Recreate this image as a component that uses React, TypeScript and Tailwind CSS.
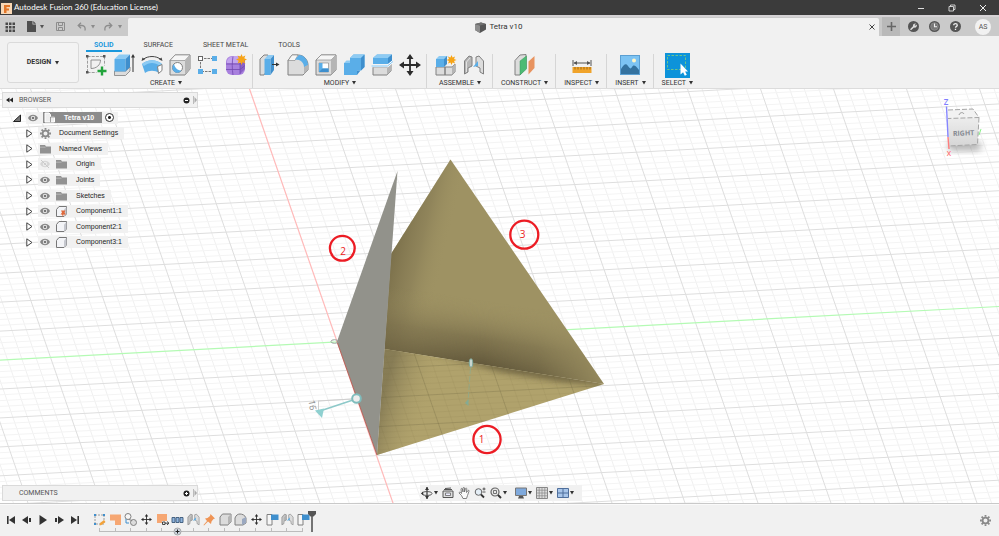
import type { ReactNode } from 'react';

const BLUE = '#5aaee8';
const BLUE_D = '#3f8fcd';
const BLUE_L = '#8ecbf3';
const LINE = '#808080';
const FACE = '#dcdcdc';
const FACE_L = '#f6f6f6';
const FACE_D = '#b5b5b5';

function Icon({ size = 22, w, label, children }: { size?: number; w?: number; label?: string; children: ReactNode }) {
  return (
    <svg
      width={w ?? size}
      height={size}
      viewBox={`0 0 ${w ?? size} ${size}`}
      fill="none"
      className="block shrink-0"
      aria-hidden={label ? undefined : true}
      aria-label={label}
    >
      {children}
    </svg>
  );
}

function Caret({ className = 'text-[#333]' }: { className?: string }) {
  return (
    <svg width="4" height="4" viewBox="0 0 4 4" className={`block shrink-0 ${className}`} aria-hidden>
      <path d="M0 0h4L2 3.500z" fill="currentColor" />
    </svg>
  );
}

function Spark({ x, y, r = 5 }: { x: number; y: number; r?: number }) {
  const pts = Array.from({ length: 16 }, (_, i) => {
    const a = (i * Math.PI) / 8;
    const k = i % 2 ? r * 0.55 : r;
    return `${x + k * Math.cos(a)},${y + k * Math.sin(a)}`;
  }).join(' ');
  return <polygon points={pts} fill="#f7a416" />;
}

/* ---------- ribbon icons ---------- */

const SketchIcon = () => (
  <Icon>
    <path d="M2.500 2.500h17M2.500 2.500v16M2.500 18.500h9M19.500 2.500v9" stroke="#888" strokeWidth=".8" strokeDasharray="3 1.200" />
    <path d="M1 1h2.500v2.500H1zM18 1h2.500v2.500H18zM1 17h2.500v2.500H1z" fill="#555" />
    <path d="M6 6h9.500c0 5-4 8.500-9.500 8.500z" stroke="#888" strokeWidth=".9" />
    <path d="M17 12.500v9M12.500 17h9" stroke="#22a43c" strokeWidth="2.400" />
  </Icon>
);
const ExtrudeIcon = () => (
  <Icon>
    <path d="M1.500 17h11l4.500-4v4l-4.500 4.500h-11z" fill={FACE} stroke={LINE} strokeWidth=".8" />
    <path d="M1.500 5h11v12.500h-11z" fill={BLUE} />
    <path d="M1.500 5 6 .5h11L12.500 5z" fill={BLUE_L} />
    <path d="M12.500 5 17 .5v12.500l-4.500 4.500z" fill={BLUE_D} />
    <path d="M20 2v16" stroke="#333" />
    <path d="M20 0l2 3.500h-4z" fill="#333" />
  </Icon>
);
const RevolveIcon = () => (
  <Icon>
    <path d="M1 10c6-5 14-5 20 0l-3 9c-4-3-10-3-14 0z" fill={BLUE} />
    <path d="M1 10c6-5 14-5 20 0l-2 2c-5-4-11-4-16 0z" fill={BLUE_L} />
    <path d="M16.500 12.500 21 10.500v6l-3.500 3z" fill="#fff" stroke={LINE} />
    <path d="M2 5.500c5-4 13-4 18 0" stroke="#444" />
    <path d="M.5 7l1-3.500 2.500 2zM21.500 7l-1-3.500-2.500 2z" fill="#444" />
  </Icon>
);
const HoleIcon = () => (
  <Icon>
    <path d="M1 6.500 6 1h15v14l-5 6H1z" fill={FACE} stroke={LINE} />
    <path d="M1 6.500 6 1h15l-5 5.500z" fill={FACE_L} stroke={LINE} strokeWidth=".6" />
    <path d="M16 6.500 21 1v14l-5 6z" fill={FACE_D} />
    <circle cx="8.500" cy="13.500" r="5" fill="#fff" stroke={LINE} />
    <path d="M5 10a5 5 0 1 0 7.500 6.500C8.500 16.500 6 14 5 10z" fill={BLUE} />
  </Icon>
);
const PatternIcon = () => (
  <Icon>
    <path d="M3.500 4.500h15M3.500 4.500v13h15" stroke="#777" strokeDasharray="2.500 1" />
    <rect x="1.500" y="2.500" width="4" height="4" fill="#fff" stroke="#666" />
    <path d="M15 2h5v5h-5zM15 15h5v5h-5zM1 15h5v5H1z" fill={BLUE} />
  </Icon>
);
const FormIcon = () => (
  <Icon>
    <rect x="1" y="2" width="19" height="19" rx="6" fill="#a880de" />
    <path d="M2 7c2-5 6-5 10-5s6 1 7 3l-4 4H2z" fill="#c3a5ee" />
    <path d="M15 9l5-4v10l-5 5z" fill="#8a60c6" />
    <path d="M1 10h14l5-5M1 15.500h14l5-4M8 2.500C7 8 7 15 8 21M15 9v11" stroke="#7247b0" strokeWidth=".8" />
    <Spark x={16.500} y={5.500} r={5.500} />
  </Icon>
);
const PressPullIcon = () => (
  <Icon>
    <path d="M1 5l4-4h4v14l-4 6H1z" fill={FACE} stroke={LINE} />
    <path d="M5.500 5h6v16h-6z" fill={BLUE} />
    <path d="M5.500 5 9 1h6l-3.500 4z" fill={BLUE_L} />
    <path d="M11.500 5 15 1v15l-3.500 5z" fill={BLUE_D} />
    <path d="M13 10.500h5" stroke="#333" />
    <path d="M20.500 10.500l-3.500-2v4z" fill="#333" />
  </Icon>
);
const FilletIcon = () => (
  <Icon>
    <path d="M1 6.500 5 1h6c6 0 10 5 10 10v5l-5 5H1z" fill={FACE} stroke={LINE} />
    <path d="M1 6.500 5 1h6L8 6.500z" fill={FACE_L} stroke={LINE} strokeWidth=".6" />
    <path d="M8 5.500 12 1c5 0 9 5 9 10l-4 2.500c0-4.500-3-8-9-8z" fill={BLUE} />
    <path d="M17 13l4-2v5l-4 4z" fill={FACE_D} />
  </Icon>
);
const ShellIcon = () => (
  <Icon>
    <path d="M1 6 6 1h15v15l-5 5H1z" fill={FACE} stroke={LINE} />
    <path d="M1 6 6 1h15l-5 5z" fill={FACE_L} stroke={LINE} strokeWidth=".6" />
    <path d="M16 6l5-5v15l-5 5z" fill={FACE_D} />
    <path d="M4 9h9.500v9H4z" fill="#fff" stroke={LINE} strokeWidth=".6" />
    <path d="M4 9v9h9.500v-3.500H7.500L7.500 9z" fill={BLUE} />
    <path d="M4 18l3.500-3.500h6V18z" fill={BLUE_D} />
  </Icon>
);
const CombineIcon = () => (
  <Icon>
    <path d="M1 9h6V4l3.500-3.500H21.500V13L18 16.500h-4V21H1z" fill={BLUE} />
    <path d="M7 4l3.500-3.500h11L18 4zM1 9l2.500-2.500H7V9z" fill={BLUE_L} />
    <path d="M18 4 21.500.5V13L18 16.500zM14 16.500h3.500L14 21z" fill={BLUE_D} />
  </Icon>
);
const SplitIcon = () => (
  <Icon>
    <path d="M2 13h14l4-3v7l-4 4H2z" fill={FACE} stroke={LINE} />
    <path d="M16 13l4-3v7l-4 4z" fill={FACE_D} />
    <path d="M2 4 6 .5h15V7l-4 3H2z" fill={BLUE} />
    <path d="M2 4 6 .5h15L17 4z" fill={BLUE_L} />
    <path d="M17 4l4-3.500V7l-4 3z" fill={BLUE_D} />
    <path d="M.5 12h16L22 7.500" stroke="#fff" strokeWidth="2.400" />
    <path d="M.5 12h16L22 7.500" stroke={BLUE} strokeWidth=".8" />
  </Icon>
);
const MoveIcon = ({ size = 22 }: { size?: number }) => (
  <svg width={size} height={size} viewBox="0 0 22 22" className="block shrink-0" aria-hidden>
    <path d="M11 3v16M3 11h16" stroke="#2c2c2c" strokeWidth="1.800" />
    <path d="M11 0l3.500 5h-7zM11 22l3.500-5h-7zM0 11l5-3.500v7zM22 11l-5-3.500v7z" fill="#2c2c2c" />
  </svg>
);
const NewComponentIcon = () => (
  <Icon>
    <path d="M1 13h9v8H1zM10 13h7l3-3v8l-3 3h-7z" fill={FACE} stroke={LINE} />
    <path d="M17 13l3-3v8l-3 3z" fill={FACE_D} />
    <path d="M1 5h8v8H1z" fill={BLUE} />
    <path d="M1 5l3-3h9L9 5z" fill={BLUE_L} />
    <path d="M9 5l3-3v8l-3 3z" fill={BLUE_D} />
    <Spark x={16.500} y={6} />
  </Icon>
);
const JointShape = () => (
  <>
    <path d="M1.500 20V7L6 2l3 1v9l-4 2v4z" fill={FACE_D} stroke={LINE} />
    <path d="M3.500 18V8L7 4" stroke="#eee" strokeWidth=".8" />
    <path d="M20.500 20V7L16 2l-3 1v9l4 2v4z" fill={FACE} stroke={LINE} />
    <path d="M10 13l5-6v5z" fill={BLUE} />
  </>
);
const JointIcon = ({ size = 22 }: { size?: number }) => (
  <svg width={size} height={size} viewBox="0 0 22 22" fill="none" className="block shrink-0" aria-hidden>
    <JointShape />
  </svg>
);
const PlaneIcon = () => (
  <Icon>
    <path d="M1 6.500 6 1l6-.5V14l-6 7H1z" fill={FACE} stroke={LINE} />
    <path d="M6 7l6.500-5v13L6 21z" fill="#4dbb74" stroke="#3a9a5c" strokeWidth=".5" />
    <path d="M14.500 7.500 20.500 2v12l-6 6.500z" fill="#e8935f" />
  </Icon>
);
const MeasureIcon = () => (
  <Icon>
    <path d="M2 6v6M20 6v6M3 9h16" stroke="#555" />
    <path d="M2.500 9l3.500-2v4zM19.500 9l-3.500-2v4z" fill="#555" />
    <rect x="1.500" y="13" width="19" height="6" fill="#f0a32a" />
    <path d="M4 13v2.500M7 13v2.500M10 13v2.500M13 13v2.500M16 13v2.500M19 13v2.500" stroke="#8b5c10" strokeWidth=".8" />
  </Icon>
);
const InsertIcon = () => (
  <Icon>
    <rect x="1.500" y="1.500" width="19" height="19" fill="#7cc3f3" stroke="#5b9fd2" />
    <path d="M2 15c3-5 5-6 7-3s3 3 4 1 3-3 7 3v4H2z" fill="#34729f" />
    <circle cx="15" cy="6.500" r="2" fill="#fff6c8" />
  </Icon>
);
const SelectIcon = () => (
  <Icon size={25}>
    <rect width="25" height="25" fill="#0d93da" />
    <rect x="2.500" y="2.500" width="18" height="14" stroke="#6cc48a" strokeDasharray="2.500 1.500" />
    <path d="M15.500 10.500v11l2.600-2.300 1.700 3.600 2-1-1.700-3.400H23z" fill="#fff" />
  </Icon>
);

function RibbonGroup({ name, last, pad = 'px-2', children }: { name: string; last?: boolean; pad?: string; children: ReactNode }) {
  return (
    <section
      aria-label={name}
      className={`relative flex flex-col items-center ${pad} ${
        last ? '' : 'after:absolute after:right-0 after:top-0.5 after:h-[34px] after:w-px after:bg-[#d6d6d6]'
      }`}
    >
      <div className="flex h-[26px] items-center gap-1.5">{children}</div>
      <button type="button" className="flex h-[10px] items-center gap-[3px] whitespace-nowrap text-[7px] leading-[10px] text-[#333]">
        {name}
        <Caret />
      </button>
    </section>
  );
}

function Tool({ name, children }: { name: string; children: ReactNode }) {
  return (
    <button type="button" aria-label={name} className="block shrink-0">
      {children}
    </button>
  );
}

/* ---------- browser tree ---------- */

const Eye = ({ off = false }: { off?: boolean }) => (
  <Icon size={10}>
    <g opacity={off ? 0.25 : 1}>
      <path d="M0 5c2.500-4.300 7.500-4.300 10 0-2.500 4.300-7.500 4.300-10 0z" fill="#858585" />
      <circle cx="5" cy="5" r="2.200" fill="#eee" />
      <circle cx="5" cy="5" r="1.300" fill="#777" />
      {off && <path d="M1 1l8 8" stroke="#555" />}
    </g>
  </Icon>
);
const Folder = () => (
  <Icon size={10} w={11}>
    <path d="M0 1h5l1 1.500h5V9.500H0z" fill="#929292" />
    <path d="M0 3.200h5.500" stroke="#c8c8c8" strokeWidth=".7" />
  </Icon>
);
function Gear({ size = 11, color = '#8a8a8a' }: { size?: number; color?: string }) {
  return (
    <svg width={size} height={size} viewBox="0 0 12 12" fill="none" className="block shrink-0" aria-hidden>
      <circle cx="6" cy="6" r="3.200" stroke={color} strokeWidth="2" />
      <path
        d="M6 0v2M6 10v2M0 6h2M10 6h2M1.760 1.760l1.400 1.400M8.840 8.840l1.400 1.400M1.760 10.240l1.400-1.400M8.840 3.160l1.400-1.400"
        stroke={color}
        strokeWidth="2"
      />
    </svg>
  );
}
const Body = ({ ground = false }: { ground?: boolean }) => (
  <Icon size={11}>
    <path d="M.5 3.500l2.500-3h7.500V8L8 10.500H.5z" fill="#f3f4f7" stroke="#777" strokeLinejoin="round" />
    <path d="M8 3.500V10L10.500 8V1z" fill="#c6c8cf" />
    {ground && <path d="M5 4.500h4.500L8.500 6.500l1.500 2H7.500L7 11 6 8.500H4.500L6 6.500z" fill="#e0693c" />}
  </Icon>
);
const Assembly = () => (
  <Icon size={11} w={12}>
    <path d="M1 1h4l1.500 1.500V10H1zM6.500 5h4V10h-4z" fill="#eee" stroke="#fff" />
    <path d="M6.500 10V5h4.500" stroke="#777" strokeWidth=".7" />
  </Icon>
);

type Node = { label: string; eye?: 'on' | 'off'; icon: ReactNode };
const NODES: Node[] = [
  { label: 'Document Settings', icon: <Gear /> },
  { label: 'Named Views', icon: <Folder /> },
  { label: 'Origin', eye: 'off', icon: <Folder /> },
  { label: 'Joints', eye: 'on', icon: <Folder /> },
  { label: 'Sketches', eye: 'on', icon: <Folder /> },
  { label: 'Component1:1', eye: 'on', icon: <Body ground /> },
  { label: 'Component2:1', eye: 'on', icon: <Body /> },
  { label: 'Component3:1', eye: 'on', icon: <Body /> },
];

function BrowserTree() {
  return (
    <ul className="grid h-[140px] auto-rows-fr font-['Liberation_Sans',Arial,sans-serif] text-[7px] leading-3 text-[#222]">
      <li className="flex items-center pl-[11px]">
        <button type="button" aria-label="Collapse Tetra v10" className="w-[13px]">
          <Icon size={8}>
            <path d="M7.500 1v6.500H.5z" fill="#777" stroke="#222" />
          </Icon>
        </button>
        <div className="flex h-3 items-center bg-[#f1f1f1] pr-1">
          <span className="pl-0.5 pr-[5px]">
            <Eye />
          </span>
          <span className="flex h-[11px] items-center gap-2 bg-[#8c8c8c] pl-px pr-2 font-bold text-white">
            <Assembly />
            <span>Tetra v10</span>
          </span>
          <input type="radio" name="active" aria-label="Activate Tetra v10" defaultChecked className="ml-[3px] size-[9px] appearance-none rounded-full border border-[#333] bg-[radial-gradient(circle,#222_0_1px,#fff_2px)]" />
        </div>
      </li>
      {NODES.map((n) => (
        <li key={n.label} className="flex items-center pl-6">
          <button type="button" aria-label={`Expand ${n.label}`} className="w-3">
            <Icon size={9} w={7}>
              <path d="M.8.800 6 4.500.800 8.200z" fill="#fff" stroke="#444" />
            </Icon>
          </button>
          <div className="flex h-3 items-center bg-[#f1f1f1] pl-0.5 pr-1.5">
            {n.eye && (
              <span className="w-4">
                <Eye off={n.eye === 'off'} />
              </span>
            )}
            <span className={n.eye ? 'w-5' : 'w-[19px]'}>{n.icon}</span>
            <span className="whitespace-nowrap">{n.label}</span>
          </div>
        </li>
      ))}
    </ul>
  );
}

function PanelBar({ title, open }: { title: string; open?: boolean }) {
  return (
    <div className="flex h-4 w-[196px] items-center border border-[#dadada] bg-[#f1f1f1] text-[7px] text-[#555]">
      <span className="w-4 pl-[3px]">
        {open && (
          <Icon size={6} w={8}>
            <path d="M3.500.500v5L0 3zM7 .5v5L3.500 3z" fill="#222" />
          </Icon>
        )}
      </span>
      <h2 className="grow">{title}</h2>
      <button type="button" aria-label={open ? 'Hide panel' : 'Add comment'} className="mr-[3px]">
        <Icon size={7}>
          <circle cx="3.500" cy="3.500" r="3" fill="#222" />
          <path d={open ? 'M2 3.500h3' : 'M2 3.500h3M3.500 2v3'} stroke="#fff" />
        </Icon>
      </button>
      <Icon size={8} w={4}>
        <path d="M.5 0v8" stroke="#bbb" />
        <path d="M1.500 1v6L4 4z" fill="#aaa" />
      </Icon>
    </div>
  );
}

/* ---------- modelling canvas ---------- */

const STEEP = 0.3466;
const SHALLOW = -0.0536;
const OX = 337.2;
const OY = 342;

function steep(k: number) {
  const x = OX + (73 * k) / 5;
  return `M${(x + STEEP * (80 - OY)).toFixed(1)} 80L${(x + STEEP * (510 - OY)).toFixed(1)} 510`;
}
function shallow(k: number) {
  const y = OY + (28.95 * k) / 5;
  return `M-5 ${(y + SHALLOW * (-5 - OX)).toFixed(1)}L1005 ${(y + SHALLOW * (1005 - OX)).toFixed(1)}`;
}
const range = (a: number, b: number) => Array.from({ length: b - a + 1 }, (_, i) => a + i);
const S = range(-30, 55);
const H = range(-50, 42);
const MINOR_V = S.filter((k) => k % 5 !== 0).map(steep).join('');
const MINOR_H = H.filter((k) => k % 5 !== 0).map(shallow).join('');
const MAJOR = S.filter((k) => k % 5 === 0 && k !== 0).map(steep).join('') + H.filter((k) => k % 5 === 0 && k !== 0).map(shallow).join('');

function Callout({ x, y, r, tx, ty, n }: { x: number; y: number; r: number; tx: number; ty: number; n: string }) {
  return (
    <g>
      <circle cx={x} cy={y} r={r} fill="none" stroke="#ec1c24" strokeWidth="2.300" />
      <text x={tx} y={ty} fontSize="10" textAnchor="middle" fill="#ec1c24">
        {n}
      </text>
    </g>
  );
}

function Canvas() {
  return (
    <svg
      className="absolute inset-0 size-full"
      viewBox="0 89 999 414"
      preserveAspectRatio="xMidYMid slice"
      fill="none"
      role="img"
      aria-label="Tetrahedron model with three numbered faces"
      fontFamily="'Open Sans', 'Noto Sans', sans-serif"
    >
      <defs>
        <clipPath id="wall">
          <path d="M450.500 159.500 604 384 384.500 349 391 254z" />
        </clipPath>
        <clipPath id="floor">
          <path d="M384.500 349 604 384 377 455z" />
        </clipPath>
        <linearGradient id="wallSide" gradientUnits="userSpaceOnUse" x1="386" y1="280" x2="436" y2="292">
          <stop offset="0" stopColor="#766b47" stopOpacity=".85" />
          <stop offset=".5" stopColor="#7f7450" stopOpacity=".45" />
          <stop offset="1" stopColor="#9d9162" stopOpacity="0" />
        </linearGradient>
        <linearGradient id="wallFoot" gradientUnits="userSpaceOnUse" x1="490" y1="366" x2="500" y2="303">
          <stop offset="0" stopColor="#62583b" />
          <stop offset=".4" stopColor="#756a48" stopOpacity=".75" />
          <stop offset="1" stopColor="#9d9162" stopOpacity="0" />
        </linearGradient>
        <linearGradient id="footFade" gradientUnits="userSpaceOnUse" x1="384" y1="0" x2="604" y2="0">
          <stop offset="0" stopColor="#fff" stopOpacity=".65" />
          <stop offset=".45" stopColor="#fff" />
          <stop offset=".7" stopColor="#fff" stopOpacity=".8" />
          <stop offset="1" stopColor="#fff" stopOpacity=".15" />
        </linearGradient>
        <mask id="footMask" maskUnits="userSpaceOnUse" x="370" y="150" width="240" height="310">
          <path d="M370 150h240v310H370z" fill="url(#footFade)" />
        </mask>
        <linearGradient id="floorSide" gradientUnits="userSpaceOnUse" x1="380" y1="405" x2="425" y2="418">
          <stop offset="0" stopColor="#7d7350" stopOpacity=".8" />
          <stop offset="1" stopColor="#b0a26c" stopOpacity="0" />
        </linearGradient>
        <filter id="soft" x="-20%" y="-60%" width="140%" height="220%">
          <feGaussianBlur stdDeviation="3.500" />
        </filter>
        <linearGradient id="cube" x1="0" y1="0" x2="0" y2="1">
          <stop offset="0" stopColor="#ededed" />
          <stop offset="1" stopColor="#d6d6d6" />
        </linearGradient>
      </defs>

      <path d="M-10 80h1020v430H-10z" fill="#fff" />
      <path d={MINOR_V} stroke="#f0f0f0" />
      <path d={MINOR_H} stroke="#f4f4f4" />
      <path d={MAJOR} stroke="#dedede" />
      <path d={shallow(0)} stroke="#b4fab4" strokeWidth="1.200" />
      <path d={steep(0)} stroke="#ffb9b9" strokeWidth="1.200" />

      <g clipPath="url(#wall)">
        <path d="M370 150h240v240H370z" fill="#9e9263" />
        <path d="M370 150h240v240H370z" fill="url(#wallSide)" />
        <path d="M370 150h240v240H370z" fill="url(#wallFoot)" mask="url(#footMask)" />
      </g>
      <g clipPath="url(#floor)">
        <path d="M370 340h240v120H370z" fill="#b0a26c" />
        <path d="M430 352 604 380 604 385 560 381 500 371z" fill="#5f5538" filter="url(#soft)" opacity=".9" />
        <path d="M370 340h240v120H370z" fill="url(#floorSide)" />
        <path d={MINOR_V + MINOR_H} stroke="#6d6340" strokeOpacity=".08" />
        <path d={MAJOR} stroke="#6d6340" strokeOpacity=".28" />
      </g>
      <path d="M397.500 171 337 341.500 377 455z" fill="#92928b" />
      <path d="M337 341.500 377 455" stroke="#b5655c" />

      <ellipse cx="334.500" cy="341.500" rx="3.500" ry="1.800" stroke="#9aa39c" />
      <path d="M356 399l-39 13" stroke="#8dc9c9" strokeWidth="1.400" />
      <path d="M352 399l-34 2M318.500 401v11" stroke="#d0d0d0" />
      <path d="M315 410.500l9-2-2 9.500z" fill="#8fd0d0" />
      <circle cx="356.500" cy="398.500" r="4.300" fill="#eee" stroke="#7fbcbc" strokeWidth="2" />
      <text x="0" y="0" fontSize="9" fill="#8a8a8a" transform="translate(308.500 400.500) rotate(82)">
        16
      </text>
      <path d="M470.500 368 468 402" stroke="#8fa98c" strokeDasharray="6 2" strokeWidth=".8" />
      <ellipse cx="471" cy="363" rx="1.800" ry="4.300" fill="#c8d6cf" stroke="#7da79b" />
      <path d="M465 403l3.500-4v7z" fill="#84ab94" />

      <Callout x={342.300} y={248.300} r={12.400} tx={343} ty={254.500} n="2" />
      <Callout x={524.300} y={234.700} r={14} tx={522.500} ty={238} n="3" />
      <Callout x={487} y={439.500} r={13.600} tx={481.500} ty={442.500} n="1" />

      <path d="M948 143h33l-1 7h-31z" fill="#666" filter="url(#soft)" opacity=".6" />
      <path d="M948 110l25-1 6 8.500-31 1z" fill="#f2f2f2" />
      <path d="M948 118.500l31-1-1.500 27-29 1.500z" fill="url(#cube)" />
      <path d="M948 110l25-1 6 8.500-31 1M979 117.500l-1.500 27-29 1.500" stroke="#a5a5a5" strokeDasharray="5 2" />
      <path d="M959 115c1-3 4-3 5-1" stroke="#999" />
      <path d="M946.500 106.500 948 137" stroke="#8585ff" strokeWidth="1.400" />
      <path d="M948 137l1 12" stroke="#ff7d7d" strokeWidth="1.400" />
      <path d="M981 129l-2 6" stroke="#8cf08c" />
      <text x="946" y="105" fontSize="8" fontWeight="600" textAnchor="middle" fill="#7f7fff">Z</text>
      <text x="949" y="155.500" fontSize="7" fontWeight="600" textAnchor="middle" fill="#ff7070">X</text>
      <text x="963.500" y="135.500" fontSize="7" fontWeight="700" textAnchor="middle" fill="#868b93" transform="rotate(-2 964 133)">RIGHT</text>
    </svg>
  );
}

/* ---------- navigation bar under the canvas ---------- */

const NAV: { name: string; caret?: boolean; icon: ReactNode }[] = [
  { name: 'Orbit', caret: true, icon: (<><path d="M6 0v12" stroke="#333" strokeWidth="1.200" /><ellipse cx="6" cy="6.500" rx="5" ry="2" stroke="#555" /><path d="M6 0l2 3H4zM6 12l2-3H4zM2 4.500l-2 2 2.500 2z" fill="#333" /></>) },
  { name: 'Look at', icon: (<><path d="M1 4h10v6.500H1z" fill="#ddd" stroke="#555" /><path d="M2 2.500h8M3 1.500l6-.5" stroke="#555" /><path d="M3.500 6h5v2.500h-5z" fill="#eef" stroke="#666" strokeWidth=".8" /></>) },
  { name: 'Pan', icon: <path d="M3.500 8.500 1 6c0-1 1-1.200 2 0L3.500 6.500 3 2c.3-.9 1.200-.8 1.400 0L5 5V1c.3-.8 1.300-.8 1.500 0v4L7.500 1.500c.4-.7 1.300-.4 1.300.4L8.500 5.500 10 3.500c.6-.5 1.300 0 1 .7L9.500 8.500 8.500 11.500H5z" fill="#fafafa" stroke="#666" strokeWidth=".8" /> },
  { name: 'Zoom', icon: (<><circle cx="4.500" cy="5" r="3.300" fill="#e4eef6" stroke="#666" /><path d="M7 7.500l3 3" stroke="#333" strokeWidth="1.800" /><path d="M8.500 2h3M10 .5v3M8.500 5h3" stroke="#333" strokeWidth=".8" /></>) },
  { name: 'Fit', caret: true, icon: (<><circle cx="5" cy="5" r="4" fill="#e8e8e8" stroke="#666" strokeWidth="1.200" /><path d="M3.500 3.500h3v3h-3z" stroke="#555" strokeWidth=".8" /><path d="M8 8l3 3" stroke="#333" strokeWidth="2" /></>) },
  { name: 'Display settings', caret: true, icon: (<><path d="M.5 1h11v7.500H.5z" fill="#7fa9dc" stroke="#777" /><path d="M4 9h4l1 2.500H3z" fill="#555" /></>) },
  { name: 'Grid and snaps', caret: true, icon: (<><path d="M.5.500h11v11H.5z" fill="#ddd" stroke="#888" /><path d="M3.200 0v12M6 0v12M8.800 0v12M0 3.200h12M0 6h12M0 8.800h12" stroke="#888" strokeWidth=".7" /></>) },
  { name: 'Viewports', caret: true, icon: (<><path d="M.5 1.500h11v9H.5z" fill="#a9c6ea" stroke="#4f6f9c" /><path d="M6 1v10M0 6h12" stroke="#4f6f9c" /></>) },
];

function NavBar() {
  return (
    <div role="toolbar" aria-label="Navigation" className="flex h-4 items-center gap-1 bg-[#f1f1f1] pl-px pr-2">
      {NAV.map((n) => (
        <button key={n.name} type="button" aria-label={n.name} className={`flex items-center gap-px ${n.name === 'Display settings' ? 'ml-1' : ''}`}>
          <Icon size={12}>{n.icon}</Icon>
          {n.caret && <Caret />}
        </button>
      ))}
    </div>
  );
}

/* ---------- timeline ---------- */

const PLAYBACK: { name: string; d: string }[] = [
  { name: 'Go to start', d: 'M1 1h1.600v8H1zM9 1v8L3 5z' },
  { name: 'Step back', d: 'M6 1v8L0 5zM7 3h2v4H7z' },
  { name: 'Play', d: 'M1.500 0 9 5l-7.500 5z' },
  { name: 'Step forward', d: 'M4 1v8l6-4zM1 3h2v4H1z' },
  { name: 'Go to end', d: 'M9 1H7.400v8H9zM1 1v8l6-4z' },
];

const Box13 = ({ children }: { children: ReactNode }) => <Icon size={13}>{children}</Icon>;
const FEATURES: { name: string; icon: ReactNode }[] = [
  { name: 'Sketch', icon: <Box13><path d="M2 2h9v9H2z" stroke="#888" strokeWidth=".8" strokeDasharray="2 1" /><path d="M1 1h2v2H1zM10 1h2v2h-2zM1 10h2v2H1z" fill={BLUE_D} /><path d="M6.500 12.500l.5-2.500 4-3 1.500 2-4 3z" fill="#f2a23a" /></Box13> },
  { name: 'Patch', icon: <Box13><path d="M1 1.500h11V12H6V7.500H1z" fill="#f6a773" /></Box13> },
  { name: 'Copy', icon: <Box13><circle cx="4" cy="3.500" r="3" fill={FACE_L} stroke={LINE} /><path d="M2 6v4h3" stroke={BLUE_D} /><circle cx="9.500" cy="9.500" r="3" fill={FACE} stroke={LINE} /><path d="M5 6.500l3 1" stroke={LINE} /></Box13> },
  { name: 'Move', icon: <MoveIcon size={11} /> },
  { name: 'Surface', icon: <Box13><path d="M1 1h10v9H1z" fill="#f6a773" /><path d="M6 8h7v5H6z" fill="#f1f1f1" /><path d="M6.500 9h2.500v2.500H6.500zM9 10.200h3.500M11 8.500l2 1.700-2 1.700" stroke="#333" strokeWidth=".9" /></Box13> },
  { name: 'Feature group', icon: <Box13><path d="M1 4.500h3v5H1zM5 4.500h3v5H5zM9 4.500h3v5H9z" fill="#8fb4dc" stroke="#3b5878" strokeWidth=".9" /></Box13> },
  { name: 'Joint', icon: <JointIcon size={13} /> },
  { name: 'Ground', icon: <Box13><path d="M7.500 1 12 5.500 10.500 6 8.500 8.500 8 11 5 8.500 1 12.500.5 12 4 8 2 5.500 4.500 5 7 3z" fill="#ef9455" /></Box13> },
  { name: 'Component', icon: <Box13><path d="M1 4l2.500-3H12v8l-3 3H1z" fill={FACE} stroke={LINE} strokeLinejoin="round" /><path d="M9 4l3-3v8l-3 3z" fill={FACE_D} /></Box13> },
  { name: 'Base feature', icon: <Box13><path d="M1 5c1-3 3-4 5-4s5 1 6 4v5l-3 2H1z" fill={FACE} stroke={LINE} /><path d="M8 6l4-2v6l-4 2z" fill="#9aa8c0" /></Box13> },
  { name: 'Move', icon: <MoveIcon size={11} /> },
  { name: 'Rigid group', icon: <Box13><path d="M1 1.500h5V12H1z" fill={FACE_L} stroke={LINE} /><path d="M5 1.500h7.500V7H5z" fill={BLUE_D} /></Box13> },
  { name: 'Joint', icon: <JointIcon size={13} /> },
  { name: 'Rigid group', icon: <Box13><path d="M1 1.500h5V12H1z" fill={FACE_L} stroke={LINE} /><path d="M5 1.500h7.500V7H5z" fill={BLUE_D} /></Box13> },
];

function Timeline() {
  return (
    <footer className="flex h-8 shrink-0 items-start border-t border-[#fafafa] bg-[#f1f1f1] pl-1.5 pr-2">
      <div className="flex h-[31px] gap-1.5 pt-[10px]">
        {PLAYBACK.map((p) => (
          <button key={p.name} type="button" aria-label={p.name} className="h-[10px]">
            <Icon size={10}>
              <path d={p.d} fill="#333" />
            </Icon>
          </button>
        ))}
      </div>
      <div className="ml-[13px] w-[217px] shrink-0 pt-2">
        <div className="flex h-[13px] items-center justify-between">
          {FEATURES.map((f, i) => (
            <button key={i} type="button" aria-label={f.name} className="flex w-[13px] justify-center">
              {f.icon}
            </button>
          ))}
        </div>
        <svg width="217" height="10" viewBox="0 0 217 10" fill="none" className="block" aria-hidden>
          <path d={'M7 5.500h203' + range(0, 13).map((i) => `M${6.5 + Math.round(i * 15.6)} 2v4`).join('')} stroke="#bcbcbc" />
          <circle cx="84.500" cy="5.500" r="3.500" fill="#cfd6e0" stroke="#999" strokeWidth=".8" />
          <path d="M82.500 5.500h4M84.500 3.500v4" stroke="#222" />
        </svg>
      </div>
      <div className="-ml-0.5 pt-1.5">
        <Icon size={21} w={8}>
          <path d="M0 0h8v3L5.500 5.500h-3L0 3z" fill="#555" />
          <path d="M4 4v17" stroke="#555" strokeWidth="1.600" />
        </Icon>
      </div>
      <button type="button" aria-label="Timeline settings" className="ml-auto pt-[10px]">
        <Gear />
      </button>
    </footer>
  );
}

/* ---------- window chrome ---------- */

function TitleBar() {
  return (
    <header className="flex h-[15px] shrink-0 items-center bg-[#3b3b3b] pl-px pr-3 text-white">
      <Icon size={12} w={11} label="Fusion 360">
        <path d="M0 1h11v11H0z" fill="#f9d7b5" />
        <path d="M3 3h6v2H5.500v1.500H8v2H5.500V11H3z" fill="#e2762a" />
      </Icon>
      <h1 className="ml-0.5 font-['Lato','Liberation_Sans',sans-serif] text-[8px] leading-[15px]">Autodesk Fusion 360 (Education License)</h1>
      <div className="ml-auto flex items-center gap-[23px]">
        <button type="button" aria-label="Minimize"><Icon size={8}><path d="M1 4.500h6" stroke="#ddd" /></Icon></button>
        <button type="button" aria-label="Restore"><Icon size={8}><path d="M1 2.500h4.500V7H1zM2.500 2.500V1H7v4.500H5.500" stroke="#ddd" strokeWidth=".9" /></Icon></button>
        <button type="button" aria-label="Close"><Icon size={8}><path d="M1 1l6 6M7 1 1 7" stroke="#eee" /></Icon></button>
      </div>
    </header>
  );
}

function AppBar() {
  return (
    <div className="flex h-[21px] shrink-0 items-stretch border-t-2 border-[#d5d2d5] bg-[#cacaca]">
      <div className="flex w-32 shrink-0 items-center pl-[5px] text-[#555]">
        <button type="button" aria-label="Data panel">
          <Icon size={10}><path d="M.5.500h2.500v2.500H.5zM4 .5h2.500v2.500H4zM7.500.500H10v2.500H7.500zM.5 4h2.500v2.500H.5zM4 4h2.500v2.500H4zM7.500 4H10v2.500H7.500zM.5 7.500h2.500V10H.5zM4 7.500h2.500V10H4zM7.500 7.500H10V10H7.500z" fill="#4a4a4a" /></Icon>
        </button>
        <button type="button" aria-label="File" className="ml-3 flex items-center gap-1">
          <Icon size={11} w={9}><path d="M0 0h5.500v3.500H9V11H0zM6.300 0 9 2.700H6.300z" fill="#4f4f4f" /></Icon>
          <Caret className="text-[#555]" />
        </button>
        <button type="button" aria-label="Save" className="ml-3">
          <Icon size={9}><path d="M.5.500h8v8h-8z" stroke="#8c8c8c" /><path d="M2.500 0v3.500h4V0M2.500 9V5.500h4V9" stroke="#8c8c8c" /></Icon>
        </button>
        <button type="button" aria-label="Undo" className="ml-3 flex items-center gap-[5px]">
          <Icon size={9}><path d="M1.500 3.500H5c2.500 0 3.500 2 3 5M4 .8 1.200 3.500 4 6.200" stroke="#8c8c8c" strokeWidth="1.300" /></Icon>
          <Caret className="text-[#8c8c8c]" />
        </button>
        <button type="button" aria-label="Redo" className="ml-[9px] flex items-center gap-[5px]">
          <Icon size={9}><path d="M7.500 3.500H4C1.500 3.500.5 5.500 1 8.500M5 .8l2.800 2.700L5 6.200" stroke="#8c8c8c" strokeWidth="1.300" /></Icon>
          <Caret className="text-[#8c8c8c]" />
        </button>
      </div>
      <div className="relative mt-px flex grow items-center justify-center rounded-t-[2px] bg-[#f1f1f1] pr-[9px] text-[8px] text-[#333]">
        <div className="flex items-center gap-[3px]">
          <Icon size={11}>
            <path d="M0 2 6 .5 11 2v5.500L5 11 0 8z" fill="#555" />
            <path d="M0 2l5 1.500V11L0 8z" fill="#8d8d8d" />
            <path d="M0 2 6 .5 11 2 5 3.500z" fill="#707070" />
          </Icon>
          <span>Tetra v10</span>
        </div>
        <button type="button" aria-label="Close tab" className="absolute right-1 top-1.5">
          <Icon size={6}><path d="M.5.500l5 5M5.500.500l-5 5" stroke="#444" /></Icon>
        </button>
      </div>
      <div className="flex shrink-0 items-center pl-[3px] pr-2">
        <button type="button" aria-label="New tab" className="flex h-full w-[18px] items-center justify-center bg-[#b9b9b9]">
          <Icon size={9}><path d="M4.500 0v9M0 4.500h9" stroke="#666" strokeWidth="1.600" /></Icon>
        </button>
        <button type="button" aria-label="Extensions" className="ml-2">
          <Icon size={11}><circle cx="5.500" cy="5.500" r="5.500" fill="#555" /><path d="M2 8.200 5 5.300a2.200 2.200 0 0 1 3-2.600L6.600 4l.6.700 1.500-1.200a2.200 2.200 0 0 1-2.700 3L3 9.200z" fill="#ddd" /></Icon>
        </button>
        <button type="button" aria-label="Job status" className="ml-[10px]">
          <Icon size={11}><circle cx="5.500" cy="5.500" r="5.500" fill="#555" /><circle cx="5.500" cy="5.500" r="3.800" fill="#777" stroke="#999" strokeWidth=".6" /><path d="M5.500 2.500v3.200H8" stroke="#eee" strokeWidth="1.100" /></Icon>
        </button>
        <button type="button" aria-label="Help" className="ml-[10px]">
          <Icon size={11}><circle cx="5.500" cy="5.500" r="5.500" fill="#555" /><path d="M3.700 4.200C3.700 2 7.300 2 7.300 4.200c0 1.200-1.800 1.200-1.800 2.600M5.500 7.700v1.300" stroke="#eee" strokeWidth="1.300" /></Icon>
        </button>
        <button type="button" aria-label="Account AS" className="ml-[14px] size-4 rounded-full bg-[#f1f1f1] text-center text-[7px] leading-4 text-[#555]">AS</button>
      </div>
    </div>
  );
}

function Ribbon() {
  return (
    <div className="flex h-[53px] shrink-0 border-b border-[#dcdcdc] bg-[#f1f1f1] pl-[7px]">
      <button type="button" className="mt-[6px] flex h-[41px] w-[72px] shrink-0 items-center justify-center gap-1 rounded-[3px] border border-[#dadada] bg-[#f3f3f3] text-[7px] font-bold text-[#333]">
        DESIGN
        <Caret />
      </button>
      <div className="flex flex-col">
        <nav aria-label="Workspace tabs" className="flex h-4 items-end gap-[14px] pl-[7px] text-[7px] text-[#444]">
          {['SOLID', 'SURFACE', 'SHEET METAL', 'TOOLS'].map((t) => (
            <button
              key={t}
              type="button"
              className={`h-[14px] border-b-2 px-2 pt-0.5 leading-[10px] ${t === 'SOLID' ? 'border-[#1b98dc] font-bold text-[#1b98dc]' : 'border-transparent'}`}
            >
              {t}
            </button>
          ))}
        </nav>
        <div className="flex">
          <RibbonGroup name="CREATE" pad="px-1.5">
            <Tool name="Create sketch"><SketchIcon /></Tool>
            <Tool name="Extrude"><ExtrudeIcon /></Tool>
            <Tool name="Revolve"><RevolveIcon /></Tool>
            <Tool name="Hole"><HoleIcon /></Tool>
            <Tool name="Pattern"><PatternIcon /></Tool>
            <Tool name="Create form"><FormIcon /></Tool>
          </RibbonGroup>
          <RibbonGroup name="MODIFY" pad="px-1.5">
            <Tool name="Press pull"><PressPullIcon /></Tool>
            <Tool name="Fillet"><FilletIcon /></Tool>
            <Tool name="Shell"><ShellIcon /></Tool>
            <Tool name="Combine"><CombineIcon /></Tool>
            <Tool name="Split body"><SplitIcon /></Tool>
            <Tool name="Move"><MoveIcon /></Tool>
          </RibbonGroup>
          <RibbonGroup name="ASSEMBLE">
            <Tool name="New component"><NewComponentIcon /></Tool>
            <Tool name="Joint"><JointIcon /></Tool>
          </RibbonGroup>
          <RibbonGroup name="CONSTRUCT"><Tool name="Offset plane"><PlaneIcon /></Tool></RibbonGroup>
          <RibbonGroup name="INSPECT"><Tool name="Measure"><MeasureIcon /></Tool></RibbonGroup>
          <RibbonGroup name="INSERT"><Tool name="Insert image"><InsertIcon /></Tool></RibbonGroup>
          <RibbonGroup name="SELECT" last><Tool name="Select"><SelectIcon /></Tool></RibbonGroup>
        </div>
      </div>
    </div>
  );
}

export default function App() {
  return (
    <div className="flex h-screen min-h-[400px] flex-col overflow-hidden bg-white font-['Roboto','Liberation_Sans',sans-serif]">
      <TitleBar />
      <AppBar />
      <Ribbon />
      <main className="relative flex min-h-0 grow flex-col justify-between border-b border-[#c9c9c9]">
        <Canvas />
        <aside aria-label="Browser" className="relative pl-0.5 pt-[3px]">
          <PanelBar title="BROWSER" open />
          <div className="pt-0.5">
            <BrowserTree />
          </div>
        </aside>
        <div className="relative grid grid-cols-[1fr_auto_1fr] items-end pb-0.5 pl-0.5">
          <PanelBar title="COMMENTS" />
          <NavBar />
        </div>
      </main>
      <Timeline />
    </div>
  );
}
